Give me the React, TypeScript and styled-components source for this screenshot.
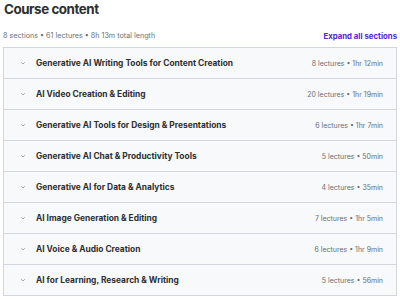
import React from "react";
import styled, { createGlobalStyle } from "styled-components";

const Global = createGlobalStyle`
  html, body { margin: 0; padding: 0; background: #ffffff; }
  body { font-family: Inter, "Noto Sans", sans-serif; color: #2d2f31; }
`;

const Page = styled.div`
  width: 400px;
  padding: 0 3px;
  box-sizing: border-box;
`;

const Title = styled.h2`
  margin: 0;
  padding: 0 0 0 1px;
  height: 24px;
  font-size: 13.4px;
  line-height: 18px;
  font-weight: 700;
  letter-spacing: -0.45px;
`;

const Meta = styled.div`
  display: flex;
  justify-content: space-between;
  align-items: center;
  height: 23px;
  font-size: 7.2px;
`;

const Summary = styled.span`
  color: #6a6f73;
`;

const Expand = styled.span`
  color: #5624d0;
  font-weight: 700;
  font-size: 7.8px;
`;

const List = styled.div`
  border: 1px solid #d1d7dc;
  border-bottom: none;
`;

const Row = styled.div`
  display: flex;
  align-items: center;
  height: 30px;
  padding: 0 13px 0 16px;
  background: #f7f9fa;
  border-bottom: 1px solid #d1d7dc;
`;

const Chevron = styled.svg`
  width: 6px;
  height: 6px;
  margin-right: 10px;
  flex: none;
`;

const Name = styled.span`
  flex: 1;
  font-size: 8.4px;
  font-weight: 700;
  color: #2d2f31;
`;

const Info = styled.span`
  font-size: 7px;
  color: #6a6f73;
`;

const sections = [
  ["Generative AI Writing Tools for Content Creation", "8 lectures • 1hr 12min"],
  ["AI Video Creation & Editing", "20 lectures • 1hr 19min"],
  ["Generative AI Tools for Design & Presentations", "6 lectures • 1hr 7min"],
  ["Generative AI Chat & Productivity Tools", "5 lectures • 50min"],
  ["Generative AI for Data & Analytics", "4 lectures • 35min"],
  ["AI Image Generation & Editing", "7 lectures • 1hr 5min"],
  ["AI Voice & Audio Creation", "6 lectures • 1hr 9min"],
  ["AI for Learning, Research & Writing", "5 lectures • 56min"],
];

export default function App() {
  return (
    <Page>
      <Global />
      <Title>Course content</Title>
      <Meta>
        <Summary>8 sections • 61 lectures • 8h 13m total length</Summary>
        <Expand>Expand all sections</Expand>
      </Meta>
      <List>
        {sections.map(([n, i]) => (
          <Row key={n}>
            <Chevron viewBox="0 0 12 12">
              <path d="M2.5 4.5 L6 8 L9.5 4.5" fill="none" stroke="#6a6f73" strokeWidth="1.2" />
            </Chevron>
            <Name>{n}</Name>
            <Info>{i}</Info>
          </Row>
        ))}
      </List>
    </Page>
  );
}
